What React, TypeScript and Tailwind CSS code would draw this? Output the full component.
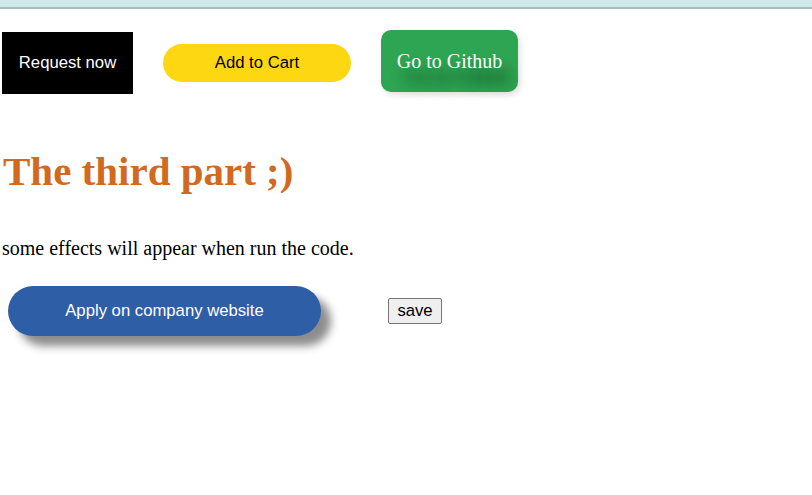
import React from "react";

export default function App() {
  return (
    <div className="w-[812px] h-[495px] bg-white overflow-hidden flex flex-col items-start" style={{ fontFamily: '"Liberation Serif", serif' }}>
      <div className="w-full h-[9px] bg-[#d0e9ea] border-b-2 border-[#a5bfc0]" />
      <div className="flex items-start pl-[2px] mt-[21px] gap-[30px] h-[64px]">
        <button className="mt-[2px] w-[131px] h-[62px] bg-black text-white text-[16.7px] font-['Liberation_Sans',sans-serif]">
          Request now
        </button>
        <button className="mt-[14px] w-[188px] h-[38px] rounded-full bg-[#fed713] text-black text-[16.7px] font-['Liberation_Sans',sans-serif]">
          Add to Cart
        </button>
        <button className="w-[137px] h-[62px] rounded-[10px] bg-[#2da552] text-white text-[20px] font-['Liberation_Serif',serif] [text-shadow:8px_15px_14px_rgba(0,0,0,0.75)] shadow-[2px_3px_6px_rgba(0,0,0,0.12)]">
          Go to Github
        </button>
      </div>
      <h1 className="mt-[57px] ml-[3px] text-[41px] leading-[41px] font-bold text-[#d2691e] font-['Liberation_Serif',serif]">
        The third part ;)
      </h1>
      <p className="mt-[46px] ml-[2px] text-[20px] leading-[20px] text-black font-['Liberation_Serif',serif]">
        some effects will appear when run the code.
      </p>
      <div className="flex items-center mt-[28px]">
        <button className="ml-[8px] w-[313px] h-[50px] rounded-full bg-[#2e5ea6] text-white text-[16.7px] font-['Liberation_Sans',sans-serif] shadow-[10px_10px_8px_rgba(0,0,0,0.45)]">
          Apply on company website
        </button>
        <button className="ml-[67px] h-[26px] w-[54px] bg-[#efefef] border border-[#767676] rounded-[2px] text-black text-[16.7px] leading-[18px] font-['Liberation_Sans',sans-serif]">
          save
        </button>
      </div>
    </div>
  );
}
